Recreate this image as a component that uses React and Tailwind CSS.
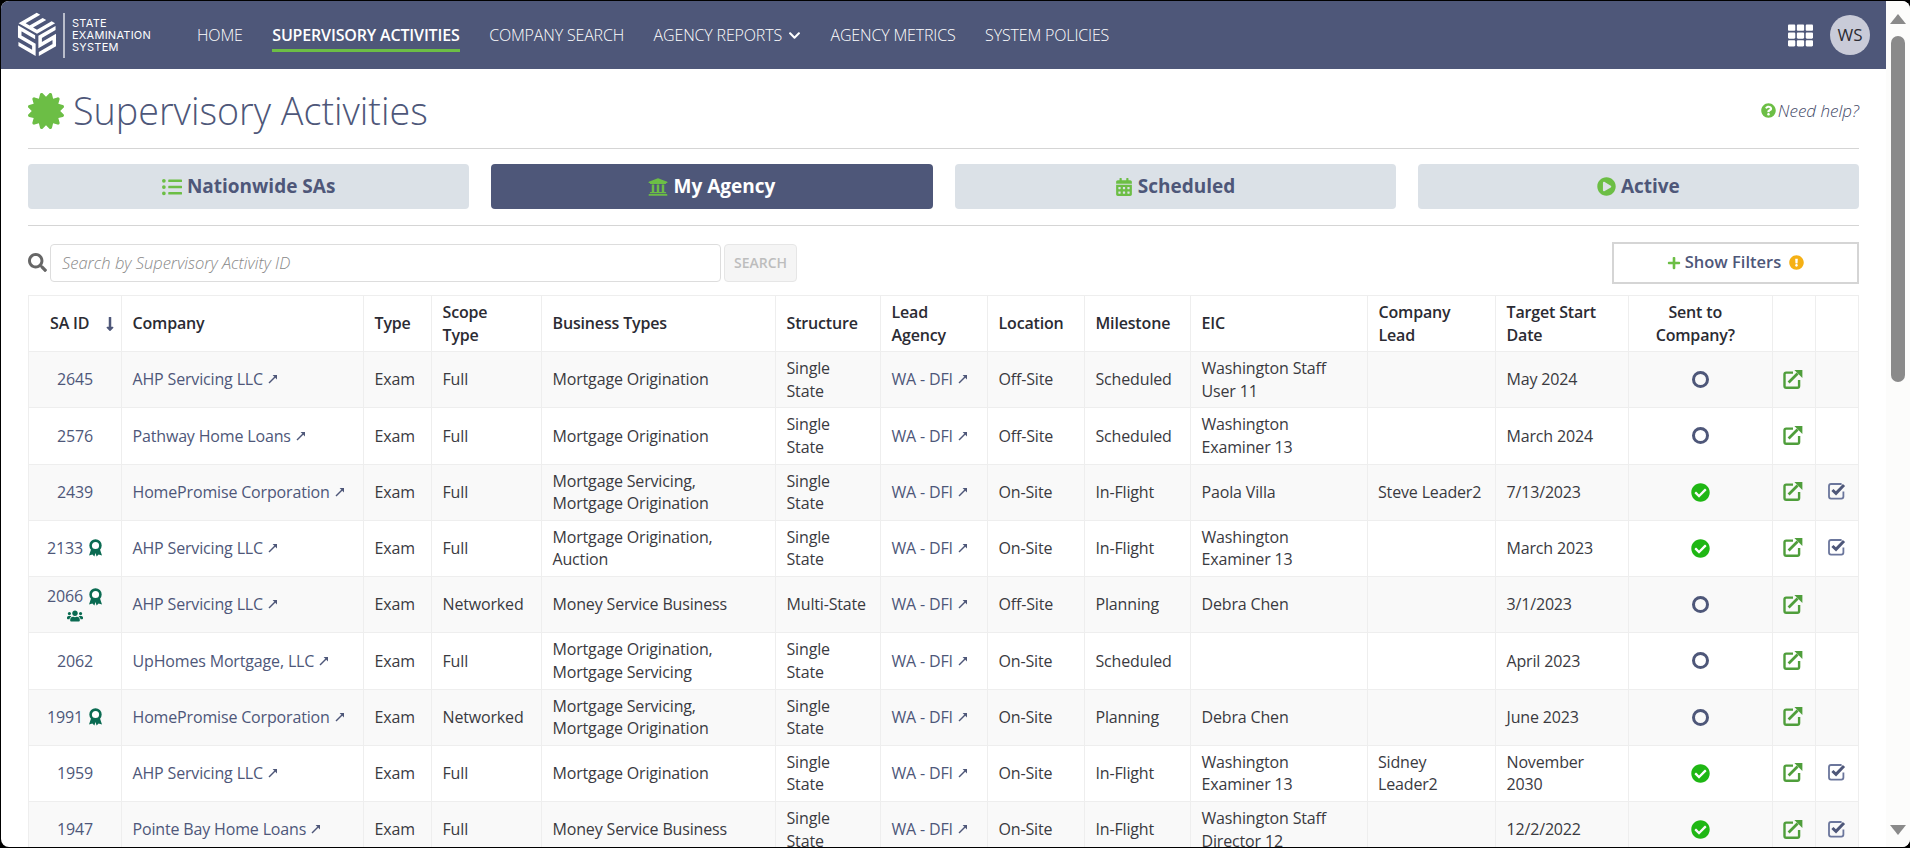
import React from 'react';
import {
  FaCalendarAlt,
  FaCertificate,
  FaCheckCircle,
  FaChevronDown,
  FaExclamationCircle,
  FaListUl,
  FaLongArrowAltDown,
  FaPlayCircle,
  FaPlus,
  FaQuestionCircle,
  FaSearch,
  FaTh,
  FaUniversity,
  FaUsers,
} from 'react-icons/fa';

const NAV = ['HOME', 'SUPERVISORY ACTIVITIES', 'COMPANY SEARCH', 'AGENCY REPORTS', 'AGENCY METRICS', 'SYSTEM POLICIES'];

const TABS = [
  { label: 'Nationwide SAs', Icon: FaListUl, size: 'text-[20px]' },
  { label: 'My Agency', Icon: FaUniversity, size: 'text-[20px]' , active: true },
  { label: 'Scheduled', Icon: FaCalendarAlt, size: 'text-[18px]' },
  { label: 'Active', Icon: FaPlayCircle, size: 'text-[19px]' },
];

const ROWS = [
  { id: 2645, company: 'AHP Servicing LLC', scope: 'Full', biz: 'Mortgage Origination', structure: 'Single State', location: 'Off-Site', milestone: 'Scheduled', eic: 'Washington Staff User 11', lead: '', start: 'May 2024' },
  { id: 2576, company: 'Pathway Home Loans', scope: 'Full', biz: 'Mortgage Origination', structure: 'Single State', location: 'Off-Site', milestone: 'Scheduled', eic: 'Washington Examiner 13', lead: '', start: 'March 2024' },
  { id: 2439, company: 'HomePromise Corporation', scope: 'Full', biz: 'Mortgage Servicing, Mortgage Origination', structure: 'Single State', location: 'On-Site', milestone: 'In-Flight', eic: 'Paola Villa', lead: 'Steve Leader2', start: '7/13/2023', sent: true },
  { id: 2133, award: true, company: 'AHP Servicing LLC', scope: 'Full', biz: 'Mortgage Origination, Auction', structure: 'Single State', location: 'On-Site', milestone: 'In-Flight', eic: 'Washington Examiner 13', lead: '', start: 'March 2023', sent: true },
  { id: 2066, award: true, team: true, company: 'AHP Servicing LLC', scope: 'Networked', biz: 'Money Service Business', structure: 'Multi-State', location: 'Off-Site', milestone: 'Planning', eic: 'Debra Chen', lead: '', start: '3/1/2023' },
  { id: 2062, company: 'UpHomes Mortgage, LLC', scope: 'Full', biz: 'Mortgage Origination, Mortgage Servicing', structure: 'Single State', location: 'On-Site', milestone: 'Scheduled', eic: '', lead: '', start: 'April 2023' },
  { id: 1991, award: true, company: 'HomePromise Corporation', scope: 'Networked', biz: 'Mortgage Servicing, Mortgage Origination', structure: 'Single State', location: 'On-Site', milestone: 'Planning', eic: 'Debra Chen', lead: '', start: 'June 2023' },
  { id: 1959, company: 'AHP Servicing LLC', scope: 'Full', biz: 'Mortgage Origination', structure: 'Single State', location: 'On-Site', milestone: 'In-Flight', eic: 'Washington Examiner 13', lead: 'Sidney Leader2', start: 'November 2030', sent: true },
  { id: 1947, company: 'Pointe Bay Home Loans', scope: 'Full', biz: 'Money Service Business', structure: 'Single State', location: 'On-Site', milestone: 'In-Flight', eic: 'Washington Staff Director 12', lead: '', start: '12/2/2022', sent: true },
];

const S_PATH = 'M0.95 0.12H0.12V0.5H0.88V0.88H0.05';

const Logo = () => (
  <svg width="40" height="46" viewBox="0 0 40 46" className="shrink-0">
    <g fill="none" stroke="#fff" strokeWidth="0.19">
      <g transform="matrix(18.6 -10.7 18.6 10.7 1.4 11.2)">
        <path d="M0.98 0.1H0.1V0.9H0.98M0.1 0.5H0.9" />
      </g>
      <g transform="matrix(18.6 10.8 0 21.6 0.5 12.4)">
        <path d={S_PATH} />
      </g>
      <g transform="matrix(18.6 -10.8 0 21.6 20.9 23.6)">
        <path d={S_PATH} />
      </g>
    </g>
  </svg>
);

const TinyArrow = () => (
  <svg width="10" height="10" viewBox="0 0 10 10" className="ml-[5px] inline-block align-[1px]">
    <path d="M1 9L7 3" stroke="#4e5779" strokeWidth="1.4" fill="none" />
    <path d="M4.6 1H9V5.4Z" fill="#4e5779" />
  </svg>
);

const Award = () => (
  <svg width="15" height="18" viewBox="0 0 15 18" className="block shrink-0">
    <path d="M3 10.5L1 16.5L4.4 15.6L6.4 17.4L7.5 14L8.6 17.4L10.6 15.6L14 16.5L12 10.5Z" fill="#0b6b52" />
    <circle cx="7.5" cy="6.5" r="4.9" fill="#fff" stroke="#0b6b52" strokeWidth="2.6" />
  </svg>
);

const OpenLink = () => (
  <svg width="20" height="20" viewBox="0 0 20 20" className="-mt-[2px] block">
    <path d="M10 3.6H3.2Q1.5 3.6 1.5 5.3V17Q1.5 18.7 3.2 18.7H14.4Q16.1 18.7 16.1 17V11" fill="none" stroke="#4f9e3b" strokeWidth="2.4" />
    <path d="M5.6 13.4L14.6 4.4" stroke="#4f9e3b" strokeWidth="2.8" fill="none" />
    <path d="M11.4 1H19.4V9Z" fill="#4f9e3b" />
  </svg>
);

const CheckBox = () => (
  <svg width="18" height="18" viewBox="0 0 18 18" className="-mt-[2px] block">
    <path d="M13.6 2H3Q1 2 1 4V14.6Q1 16.6 3 16.6H13.4Q15.4 16.6 15.4 14.6V9.5" fill="none" stroke="#6b769c" strokeWidth="1.8" />
    <path d="M4.4 8L8 11.4L16 3" fill="none" stroke="#4e5779" strokeWidth="3" />
  </svg>
);

const Th = ({ children, className = 'text-left' }) => (
  <th className={`border border-[#eeeeee] py-[5px] pl-[10.5px] align-middle font-semibold leading-[22.4px] text-[#2b2b33] ${className}`}>
    {children}
  </th>
);

const Td = ({ children, className = '' }) => (
  <td className={`h-[56.25px] border border-[#eeeeee] py-[5px] align-middle leading-[22.4px] ${className}`}>
    {children}
  </td>
);

const SaRow = ({ row, index }) => (
  <tr className={`text-[#3a3a3f] ${index % 2 === 0 ? 'bg-[#f9f9f9]' : 'bg-white'}`}>
    <Td className="text-center text-[#4e5779]">
      <div className="flex h-[22.4px] items-center justify-center gap-[5px]">
        {row.id}
        {row.award && <Award />}
      </div>
      {row.team && <FaUsers className="mx-auto text-[16px] text-[#0b6b52]" />}
    </Td>
    <Td className="whitespace-nowrap pl-[10.5px] text-[#4e5779]">
      {row.company}
      <TinyArrow />
    </Td>
    <Td className="pl-[10.5px]">Exam</Td>
    <Td className="pl-[10.5px]">{row.scope}</Td>
    <Td className="px-[10.5px]">{row.biz}</Td>
    <Td className="px-[10.5px]">{row.structure}</Td>
    <Td className="whitespace-nowrap pl-[10.5px] text-[#4e5779]">
      WA - DFI
      <TinyArrow />
    </Td>
    <Td className="pl-[10.5px]">{row.location}</Td>
    <Td className="pl-[10.5px]">{row.milestone}</Td>
    <Td className="px-[10.5px]">{row.eic}</Td>
    <Td className="px-[10px]">{row.lead}</Td>
    <Td className="px-[10.5px]">{row.start}</Td>
    <Td>
      {row.sent ? (
        <FaCheckCircle className="mx-auto text-[19px] text-[#1fb714]" />
      ) : (
        <div className="mx-auto h-[17px] w-[17px] rounded-full border-[3px] border-[#4e5779]" />
      )}
    </Td>
    <Td className="pl-[10px]">
      <OpenLink />
    </Td>
    <Td className="pl-[12px]">{row.sent && <CheckBox />}</Td>
  </tr>
);

export default function App() {
  return (
    <div className="flex h-screen w-screen overflow-hidden bg-black py-px pl-px font-['Open_Sans',sans-serif] text-[16px] tracking-[-0.16px]">
      <div className="flex min-w-0 flex-1 overflow-hidden rounded-[8px] bg-white">
        <div className="flex min-w-0 flex-1 flex-col">
          <header className="flex h-[68px] shrink-0 items-center bg-[#4e5779] text-white">
            <div className="ml-[16px] flex items-center">
              <Logo />
              <div className="ml-[6px] h-[45px] w-[2px] bg-[#b9bdcb]" />
              <div className="ml-[7px] w-[78px] font-['Inter',sans-serif] text-[11px] leading-[12px] tracking-[0.25px]">
                <div>STATE</div>
                <div>EXAMINATION</div>
                <div>SYSTEM</div>
              </div>
            </div>
            <nav className="ml-[47px] flex items-center gap-[29.5px]">
              {NAV.map((item) => (
                <a key={item} className={`relative flex items-center whitespace-nowrap ${item === 'SUPERVISORY ACTIVITIES' ? 'font-semibold' : 'font-light'}`}>
                  {item}
                  {item === 'AGENCY REPORTS' && <FaChevronDown className="ml-[6px] text-[13px]" />}
                  {item === 'SUPERVISORY ACTIVITIES' && (
                    <span className="absolute inset-x-0 top-[26px] h-[3px] bg-[#6cbe45]" />
                  )}
                </a>
              ))}
            </nav>
            <FaTh className="ml-auto text-[25px]" />
            <div className="ml-[17px] mr-[16px] flex h-[40px] w-[40px] items-center justify-center rounded-full bg-[#c9cbd8] text-[17px] tracking-normal text-[#2b2b33]">
              WS
            </div>
          </header>

          <main className="min-h-0 flex-1 overflow-hidden px-[27px]">
            <div className="flex h-[80px] items-center border-b border-[#d5d5d5] pt-[4px]">
              <FaCertificate className="text-[36px] text-[#6cbe45]" />
              <h1 className="ml-[9px] mt-[1px] text-[37.7px] font-light leading-none tracking-normal text-[#4e5779]">Supervisory Activities</h1>
              <div className="ml-auto flex items-center text-[#3f4866]">
                <FaQuestionCircle className="text-[15px] text-[#6cbe45]" />
                <span className="ml-[2px] text-[17px] font-light italic tracking-normal">Need help?</span>
              </div>
            </div>

            <div className="grid grid-cols-4 gap-[22px] border-b border-[#d5d5d5] pb-[16px] pt-[15px]">
              {TABS.map(({ label, Icon, size, active }) => (
                <button key={label} className={`flex h-[45px] items-center justify-center gap-[5px] rounded-[4px] text-[19px] font-bold tracking-normal ${active ? 'bg-[#4e5779] text-white' : 'bg-[#dbe1e7] text-[#4e5779]'}`}>
                  <Icon className={`${size} text-[#6cbe45]`} />
                  {label}
                </button>
              ))}
            </div>

            <div className="flex h-[69px] items-center pb-[11px] pt-[15px]">
              <FaSearch className="text-[19px] text-[#666666]" />
              <input
                readOnly
                placeholder="Search by Supervisory Activity ID"
                className="ml-[3px] h-[38px] w-[671px] rounded-[4px] border border-[#dddddd] px-[11px] text-[16.5px] font-light italic tracking-normal placeholder:text-[#888888]"
              />
              <button className="ml-[3px] h-[38px] w-[73px] rounded-[4px] border border-[#e6e6e6] bg-[#f5f5f5] text-[14px] font-semibold tracking-normal text-[#bdbdbd]">
                SEARCH
              </button>
              <button className="ml-auto flex h-[42px] w-[247px] items-center justify-center border-2 border-[#d5d5d5] text-[16.5px] font-semibold tracking-normal text-[#4e5779]">
                <FaPlus className="text-[14px] text-[#6cbe45]" />
                <span className="ml-[4px]">Show Filters</span>
                <FaExclamationCircle className="ml-[8px] text-[15px] text-[#f5b014]" />
              </button>
            </div>

            <table className="w-[1830px] table-fixed border-collapse">
              <colgroup>
                <col className="w-[93px]" />
                <col className="w-[242px]" />
                <col className="w-[68px]" />
                <col className="w-[110px]" />
                <col className="w-[234px]" />
                <col className="w-[105px]" />
                <col className="w-[107px]" />
                <col className="w-[97px]" />
                <col className="w-[106px]" />
                <col className="w-[177px]" />
                <col className="w-[128px]" />
                <col className="w-[133px]" />
                <col className="w-[144px]" />
                <col className="w-[43px]" />
                <col className="w-[43px]" />
              </colgroup>
              <thead>
                <tr className="h-[56px]">
                  <Th className="pl-[21px] pr-[3px]">
                    <div className="flex items-center justify-between">
                      SA ID
                      <FaLongArrowAltDown className="text-[16px] text-[#4e5779]" />
                    </div>
                  </Th>
                  <Th>Company</Th>
                  <Th>Type</Th>
                  <Th className="pr-[30px] text-left">Scope Type</Th>
                  <Th>Business Types</Th>
                  <Th>Structure</Th>
                  <Th className="pr-[30px] text-left">Lead Agency</Th>
                  <Th>Location</Th>
                  <Th>Milestone</Th>
                  <Th>EIC</Th>
                  <Th className="pr-[30px] text-left">Company Lead</Th>
                  <Th>Target Start Date</Th>
                  <Th className="pr-[21px] text-center">Sent to Company?</Th>
                  <Th />
                  <Th />
                </tr>
              </thead>
              <tbody>
                {ROWS.map((row, i) => (
                  <SaRow key={row.id} row={row} index={i} />
                ))}
              </tbody>
            </table>
          </main>
        </div>

        <div className="flex w-[24px] shrink-0 flex-col items-center bg-[#fcfcfb] pb-[12px] pt-[13px]">
          <div className="h-0 w-0 border-x-[8px] border-b-[10px] border-x-transparent border-b-[#8a8a8a]" />
          <div className="mt-[12px] h-[346px] w-[14px] rounded-[7px] bg-[#8a8a8a]" />
          <div className="mt-auto h-0 w-0 border-x-[8px] border-t-[10px] border-x-transparent border-t-[#8a8a8a]" />
        </div>
      </div>
    </div>
  );
}
